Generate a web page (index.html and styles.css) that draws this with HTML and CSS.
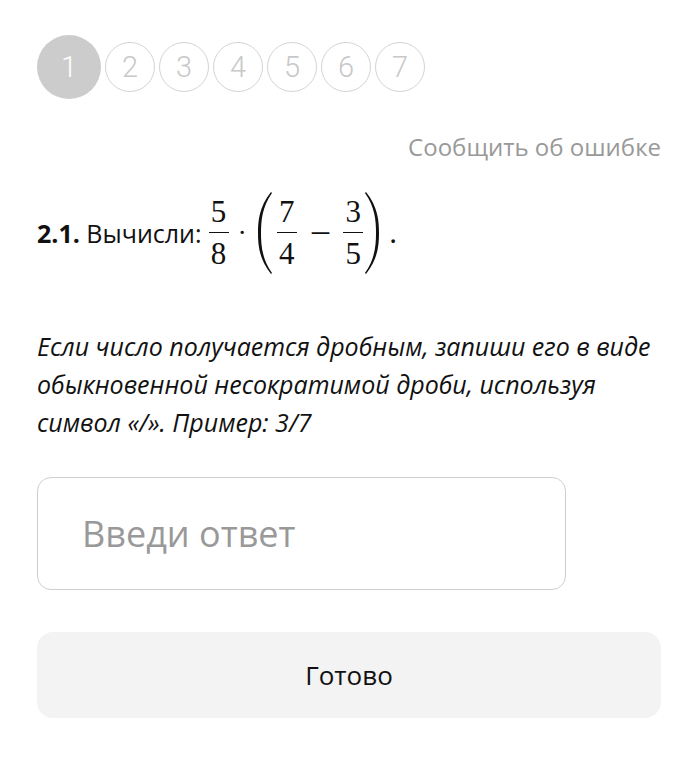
FILE: index.html
```html
<!DOCTYPE html>
<html lang="ru">
<head>
<meta charset="utf-8">
<link rel="stylesheet" href="styles.css">
</head>
<body>
<div class="page">
  <div class="steps">
    <div class="step step-active">1</div>
    <div class="step">2</div>
    <div class="step">3</div>
    <div class="step">4</div>
    <div class="step">5</div>
    <div class="step">6</div>
    <div class="step">7</div>
  </div>
  <div class="report-row"><span class="report">Сообщить об ошибке</span></div>
  <div class="question">
    <span class="qnum">2.1.</span>&nbsp;<span class="qtext">Вычисли:</span>
    <span class="math">
      <span class="frac"><span class="num">5</span><span class="bar"></span><span class="den">8</span></span>
      <span class="cdot">·</span>
      <svg class="paren paren-l" width="20" height="84" viewBox="0 0 20 84"><path d="M18 1 C6 16 5 30 5 42 C5 54 6 68 18 83 L19 82 C9 68 8 54 8 42 C8 30 9 16 19 2 Z" fill="#111"/></svg>
      <span class="frac"><span class="num">7</span><span class="bar"></span><span class="den">4</span></span>
      <span class="minus">−</span>
      <span class="frac"><span class="num">3</span><span class="bar"></span><span class="den">5</span></span>
      <svg class="paren" width="20" height="84" viewBox="0 0 20 84"><path d="M2 1 C14 16 15 30 15 42 C15 54 14 68 2 83 L1 82 C11 68 12 54 12 42 C12 30 11 16 1 2 Z" fill="#111"/></svg>
      <span class="dot">.</span>
    </span>
  </div>
  <p class="hint">Если число получается дробным, запиши его в виде обыкновенной несократимой дроби, используя символ «/». Пример: 3/7</p>
  <div class="input-box"><span class="placeholder">Введи ответ</span></div>
  <div class="button">Готово</div>
</div>
</body>
</html>
```
FILE: styles.css
```css
* { box-sizing: border-box; }
html, body { margin: 0; padding: 0; background: #fff; }
body { font-family: "Open Sans", "Noto Sans", sans-serif; color: #111; }
.page { padding: 35px 37px 0 37px; }

.steps { display: flex; align-items: center; gap: 4px; height: 64px; }
.step {
  width: 50px; height: 50px; border-radius: 50%;
  border: 1.5px solid #d4d4d4;
  display: flex; align-items: center; justify-content: center;
  font-family: Roboto, sans-serif; font-weight: 300; font-size: 29px; color: #c8c8c8;
}
.step-active {
  width: 64px; height: 64px; border: none; background: #cccccc; color: #fff;
}

.report-row { display: flex; justify-content: flex-end; margin-top: 32px; }
.report { font-size: 24px; color: #999; line-height: 32px; }

.question { display: flex; align-items: center; margin-top: 28px; font-size: 25px; height: 84px; }
.qnum { font-weight: 700; }
.qtext { margin-right: 6px; }
.math { display: inline-flex; align-items: center; font-family: "Liberation Serif", "DejaVu Serif", serif; font-size: 31px; }
.frac { display: inline-flex; flex-direction: column; align-items: center; padding: 0 1px; }
.num, .den { line-height: 34px; }
.bar { width: 20px; height: 1.5px; background: #111; margin: 3px 0 4px; }
.cdot { margin: 0 6px 0 8px; font-size: 28px; }
.paren { display: block; }
.paren-l { margin-right: 3px; }
.minus { margin: 0 11px 0 12px; font-size: 38px; line-height: 1; }
.dot { align-self: center; margin-left: 5px; }

.hint { margin: 52px 0 0 0; font-style: italic; font-size: 25px; line-height: 38px; color: #111; }

.input-box {
  margin-top: 36px; width: 529px; height: 113px;
  border: 1.5px solid #cfcfcf; border-radius: 14px;
  display: flex; align-items: center; padding-left: 44px;
}
.placeholder { font-size: 36px; color: #999; }

.button {
  margin-top: 42px; height: 86px; border-radius: 16px; background: #f3f3f3;
  display: flex; align-items: center; justify-content: center;
  font-size: 26px; color: #111;
}
```
